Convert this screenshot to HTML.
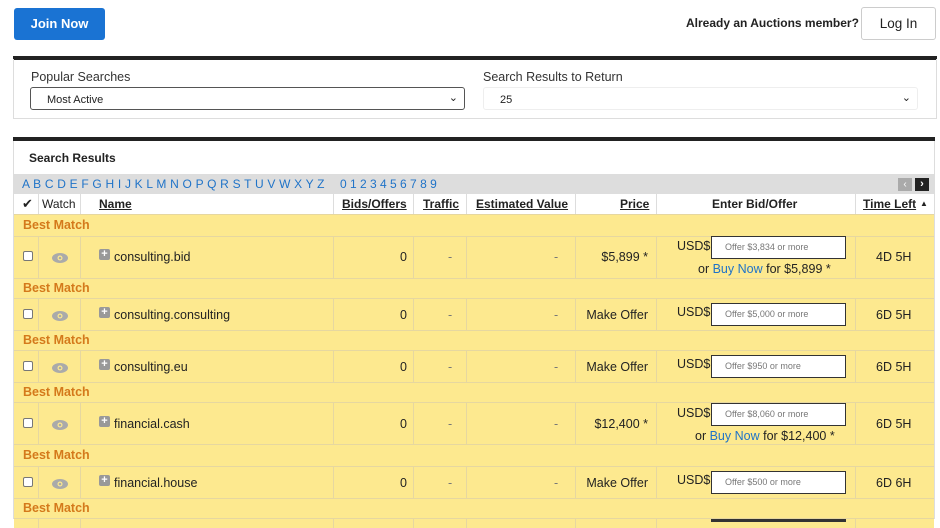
<!DOCTYPE html>
<html><head><meta charset="utf-8"><style>
*{box-sizing:border-box;margin:0;padding:0}
body{width:940px;height:519px;overflow:hidden;background:#fff;font-family:"Liberation Sans",sans-serif;color:#222;position:relative;font-size:12.5px}
.a{position:absolute}
.btn{position:absolute;border-radius:3px;font-weight:bold;font-size:13px;text-align:center}
.r{position:absolute;left:14px;width:920px;background:#fde98f;border-top:1px solid #e6d7a0}
.c{position:absolute;top:0;bottom:0;border-left:1px solid #e6d7a0}
.bm{position:absolute;left:9px;color:#d4791b;font-weight:bold;font-size:12.5px}
.cb{position:absolute;left:9px;width:10px;height:10px;border:1px solid #777;border-radius:2px;background:#fff}
.eye{position:absolute;left:38px}
.plus{position:absolute;left:85px;width:11px;height:11px;background:#999;border-radius:2px;color:#fff;font-size:11px;line-height:11px;text-align:center;font-weight:bold}
.nm{position:absolute;left:100px}
.rt{position:absolute;text-align:right}
.inp{position:absolute;left:697px;width:135px;height:23px;border:1.5px solid #333;background:#fff;font-size:9px;color:#777;padding:5px 0 0 13px}
.blue{color:#1f73c8}
.h{position:absolute;top:3px;font-weight:bold;text-decoration:underline;font-size:12px}
</style></head><body>
<div class="btn" style="left:14px;top:8px;width:91px;height:32px;background:#1a73d3;color:#fff;line-height:32px">Join Now</div>
<div class="a" style="left:686px;top:16px;font-weight:bold;font-size:12px">Already an Auctions member?</div>
<div class="btn" style="left:861px;top:7px;width:75px;height:33px;border:1px solid #ccc;line-height:31px;font-weight:normal;font-size:13.5px;background:#fff">Log In</div>

<div class="a" style="left:13px;top:56px;width:924px;height:4px;background:#222"></div>
<div class="a" style="left:13px;top:59px;width:924px;height:60px;border:1px solid #ddd;border-top:none"></div>
<div class="a" style="left:31px;top:70px;font-size:12.5px;color:#333">Popular Searches</div>
<div class="a" style="left:30px;top:87px;width:435px;height:23px;border:1px solid #555;border-radius:3px;font-size:11px;padding:6px 0 0 16px">Most Active<span style="position:absolute;right:6px;top:3px;font-size:11px">&#8964;</span></div>
<div class="a" style="left:483px;top:70px;font-size:12.5px;color:#333">Search Results to Return</div>
<div class="a" style="left:483px;top:87px;width:435px;height:23px;border:1px solid #eee;border-radius:3px;font-size:11px;padding:6px 0 0 16px">25<span style="position:absolute;right:6px;top:3px;font-size:11px">&#8964;</span></div>

<div class="a" style="left:13px;top:137px;width:922px;height:4px;background:#222"></div>
<div class="a" style="left:13px;top:141px;width:922px;height:378px;border:1px solid #ddd;border-top:none"></div>
<div class="a" style="left:29px;top:151px;font-weight:bold;font-size:12px">Search Results</div>
<div class="a" style="left:14px;top:174px;width:920px;height:20px;background:#ddd"></div>
<div class="a blue" style="left:22px;top:177px;font-size:12px;letter-spacing:0.2px">A B C D E F G H I J K L M N O P Q R S T U V W X Y Z</div>
<div class="a blue" style="left:340px;top:177px;font-size:12px">0 1 2 3 4 5 6 7 8 9</div>
<div class="a" style="left:898px;top:178px;width:14px;height:13px;background:#aaa;color:#fff;font-size:10px;text-align:center;line-height:13px">&lsaquo;</div>
<div class="a" style="left:915px;top:178px;width:14px;height:13px;background:#222;color:#fff;font-size:11px;text-align:center;line-height:13px;font-weight:bold">&rsaquo;</div>

<div class="a" style="left:14px;top:194px;width:920px;height:20px;background:#fff">
 <div class="c" style="left:24px;border-color:#ddd"></div><div class="c" style="left:66px;border-color:#ddd"></div><div class="c" style="left:319px;border-color:#ddd"></div><div class="c" style="left:399px;border-color:#ddd"></div><div class="c" style="left:452px;border-color:#ddd"></div><div class="c" style="left:561px;border-color:#ddd"></div><div class="c" style="left:642px;border-color:#ddd"></div><div class="c" style="left:841px;border-color:#ddd"></div>
 <div class="a" style="left:8px;top:2px;font-size:13px">&#10004;</div>
 <div class="a" style="left:28px;top:3px;font-size:12px">Watch</div>
 <div class="h" style="left:85px">Name</div>
 <div class="h" style="left:328px">Bids/Offers</div>
 <div class="h" style="left:409px">Traffic</div>
 <div class="h" style="left:462px">Estimated Value</div>
 <div class="h" style="left:606px">Price</div>
 <div class="a" style="left:698px;top:3px;font-weight:bold;font-size:12px">Enter Bid/Offer</div>
 <div class="h" style="left:849px">Time Left</div><div class="a" style="left:906px;top:5px;font-size:8px">&#9650;</div>
</div>

<div class="r" style="top:214px;height:22px"><div class="bm" style="top:3px">Best Match</div></div>
<div class="r" style="top:236px;height:42px">
<div class="c" style="left:24px"></div><div class="c" style="left:66px"></div><div class="c" style="left:319px"></div><div class="c" style="left:399px"></div><div class="c" style="left:452px"></div><div class="c" style="left:561px"></div><div class="c" style="left:642px"></div><div class="c" style="left:841px"></div>
<div class="cb" style="top:14px"></div><svg class="eye" style="top:16px" width="16" height="10" viewBox="0 0 16 10"><ellipse cx="8" cy="5" rx="8" ry="5" fill="#aaa"/><circle cx="8" cy="5" r="2.5" fill="#fde98f"/><circle cx="8" cy="5" r="1.3" fill="#aaa"/></svg>
<div class="plus" style="top:12px">+</div><div class="nm" style="top:13px">consulting.bid</div>
<div class="rt" style="right:527px;top:13px">0</div><div class="a" style="left:434px;top:13px;color:#777">-</div><div class="a" style="left:540px;top:13px;color:#777">-</div>
<div class="rt" style="right:286px;top:13px">$5,899 *</div>
<div class="a" style="left:663px;top:2px">USD$</div><div class="inp" style="top:-1px">Offer $3,834 or more</div>
<div class="a" style="left:684px;top:25px">or <span class="blue">Buy Now</span> for $5,899 *</div>
<div class="a" style="left:862px;top:13px">4D 5H</div></div>

<div class="r" style="top:278px;height:20px"><div class="bm" style="top:2px">Best Match</div></div>
<div class="r" style="top:298px;height:32px">
<div class="c" style="left:24px"></div><div class="c" style="left:66px"></div><div class="c" style="left:319px"></div><div class="c" style="left:399px"></div><div class="c" style="left:452px"></div><div class="c" style="left:561px"></div><div class="c" style="left:642px"></div><div class="c" style="left:841px"></div>
<div class="cb" style="top:10px"></div><svg class="eye" style="top:12px" width="16" height="10" viewBox="0 0 16 10"><ellipse cx="8" cy="5" rx="8" ry="5" fill="#aaa"/><circle cx="8" cy="5" r="2.5" fill="#fde98f"/><circle cx="8" cy="5" r="1.3" fill="#aaa"/></svg>
<div class="plus" style="top:8px">+</div><div class="nm" style="top:9px">consulting.consulting</div>
<div class="rt" style="right:527px;top:9px">0</div><div class="a" style="left:434px;top:9px;color:#777">-</div><div class="a" style="left:540px;top:9px;color:#777">-</div>
<div class="rt" style="right:286px;top:9px">Make Offer</div>
<div class="a" style="left:663px;top:6px">USD$</div><div class="inp" style="top:4px">Offer $5,000 or more</div>
<div class="a" style="left:862px;top:9px">6D 5H</div></div>

<div class="r" style="top:330px;height:20px"><div class="bm" style="top:2px">Best Match</div></div>
<div class="r" style="top:350px;height:32px">
<div class="c" style="left:24px"></div><div class="c" style="left:66px"></div><div class="c" style="left:319px"></div><div class="c" style="left:399px"></div><div class="c" style="left:452px"></div><div class="c" style="left:561px"></div><div class="c" style="left:642px"></div><div class="c" style="left:841px"></div>
<div class="cb" style="top:10px"></div><svg class="eye" style="top:12px" width="16" height="10" viewBox="0 0 16 10"><ellipse cx="8" cy="5" rx="8" ry="5" fill="#aaa"/><circle cx="8" cy="5" r="2.5" fill="#fde98f"/><circle cx="8" cy="5" r="1.3" fill="#aaa"/></svg>
<div class="plus" style="top:8px">+</div><div class="nm" style="top:9px">consulting.eu</div>
<div class="rt" style="right:527px;top:9px">0</div><div class="a" style="left:434px;top:9px;color:#777">-</div><div class="a" style="left:540px;top:9px;color:#777">-</div>
<div class="rt" style="right:286px;top:9px">Make Offer</div>
<div class="a" style="left:663px;top:6px">USD$</div><div class="inp" style="top:4px">Offer $950 or more</div>
<div class="a" style="left:862px;top:9px">6D 5H</div></div>

<div class="r" style="top:382px;height:20px"><div class="bm" style="top:2px">Best Match</div></div>
<div class="r" style="top:402px;height:42px">
<div class="c" style="left:24px"></div><div class="c" style="left:66px"></div><div class="c" style="left:319px"></div><div class="c" style="left:399px"></div><div class="c" style="left:452px"></div><div class="c" style="left:561px"></div><div class="c" style="left:642px"></div><div class="c" style="left:841px"></div>
<div class="cb" style="top:15px"></div><svg class="eye" style="top:17px" width="16" height="10" viewBox="0 0 16 10"><ellipse cx="8" cy="5" rx="8" ry="5" fill="#aaa"/><circle cx="8" cy="5" r="2.5" fill="#fde98f"/><circle cx="8" cy="5" r="1.3" fill="#aaa"/></svg>
<div class="plus" style="top:13px">+</div><div class="nm" style="top:14px">financial.cash</div>
<div class="rt" style="right:527px;top:14px">0</div><div class="a" style="left:434px;top:14px;color:#777">-</div><div class="a" style="left:540px;top:14px;color:#777">-</div>
<div class="rt" style="right:286px;top:14px">$12,400 *</div>
<div class="a" style="left:663px;top:3px">USD$</div><div class="inp" style="top:0px">Offer $8,060 or more</div>
<div class="a" style="left:681px;top:26px">or <span class="blue">Buy Now</span> for $12,400 *</div>
<div class="a" style="left:862px;top:14px">6D 5H</div></div>

<div class="r" style="top:444px;height:22px"><div class="bm" style="top:3px">Best Match</div></div>
<div class="r" style="top:466px;height:32px">
<div class="c" style="left:24px"></div><div class="c" style="left:66px"></div><div class="c" style="left:319px"></div><div class="c" style="left:399px"></div><div class="c" style="left:452px"></div><div class="c" style="left:561px"></div><div class="c" style="left:642px"></div><div class="c" style="left:841px"></div>
<div class="cb" style="top:10px"></div><svg class="eye" style="top:12px" width="16" height="10" viewBox="0 0 16 10"><ellipse cx="8" cy="5" rx="8" ry="5" fill="#aaa"/><circle cx="8" cy="5" r="2.5" fill="#fde98f"/><circle cx="8" cy="5" r="1.3" fill="#aaa"/></svg>
<div class="plus" style="top:8px">+</div><div class="nm" style="top:9px">financial.house</div>
<div class="rt" style="right:527px;top:9px">0</div><div class="a" style="left:434px;top:9px;color:#777">-</div><div class="a" style="left:540px;top:9px;color:#777">-</div>
<div class="rt" style="right:286px;top:9px">Make Offer</div>
<div class="a" style="left:663px;top:6px">USD$</div><div class="inp" style="top:4px">Offer $500 or more</div>
<div class="a" style="left:862px;top:9px">6D 6H</div></div>

<div class="r" style="top:498px;height:20px"><div class="bm" style="top:2px">Best Match</div></div>
<div class="r" style="top:518px;height:10px">
<div class="c" style="left:24px"></div><div class="c" style="left:66px"></div><div class="c" style="left:319px"></div><div class="c" style="left:399px"></div><div class="c" style="left:452px"></div><div class="c" style="left:561px"></div><div class="c" style="left:642px"></div><div class="c" style="left:841px"></div>
<div class="a" style="left:697px;top:0;width:135px;height:3px;background:#333"></div></div>
</body></html>
